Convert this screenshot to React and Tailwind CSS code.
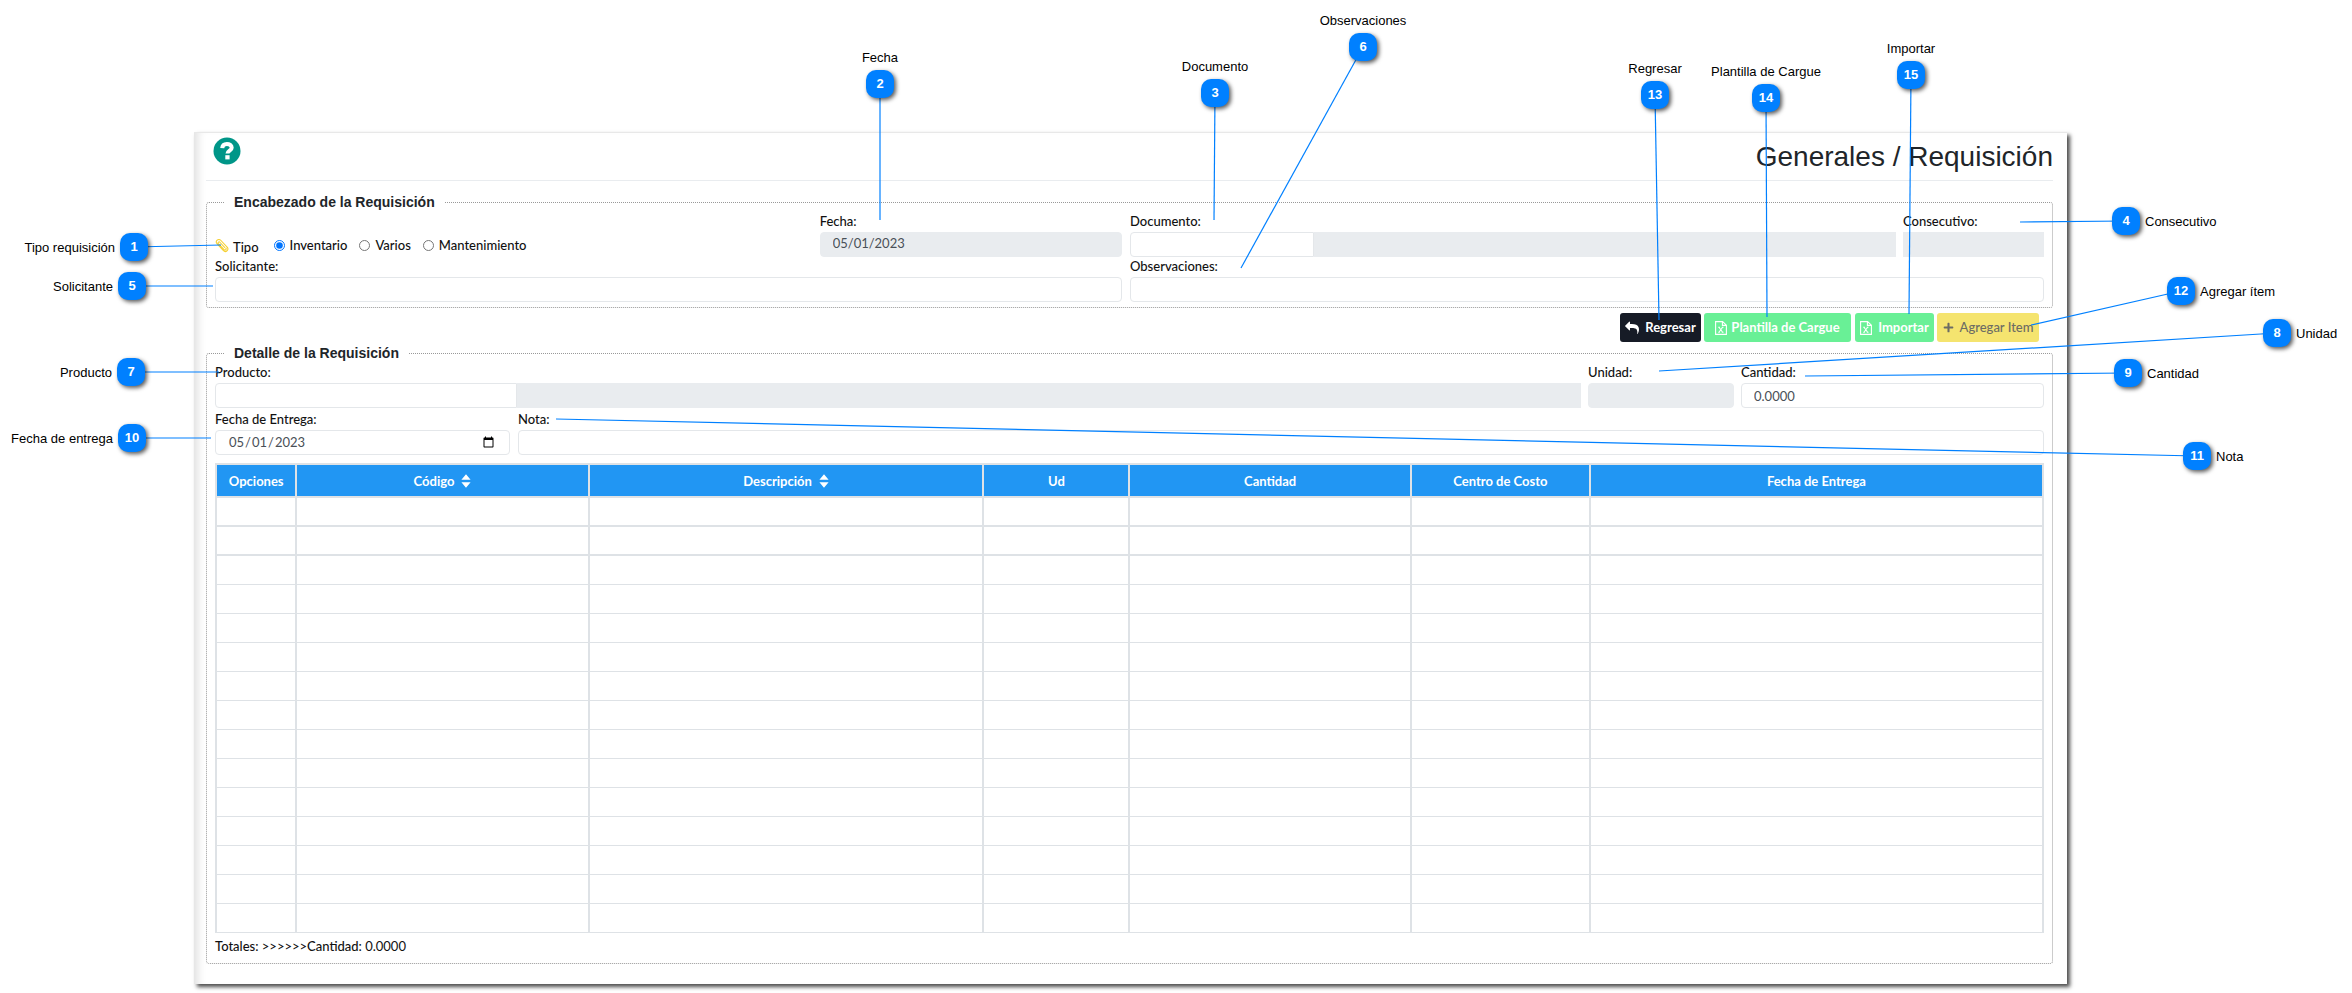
import { FaPlus } from 'react-icons/fa';

const L = "font-['Lato',sans-serif]";
const A = "font-['Liberation_Sans',Arial,sans-serif]";

const callouts = [
  { n: 1, x: 120, y: 233, label: 'Tipo requisición', side: 'left', to: [221, 245] },
  { n: 2, x: 866, y: 70, label: 'Fecha', side: 'top', to: [880, 220] },
  { n: 3, x: 1201, y: 79, label: 'Documento', side: 'top', to: [1214, 220] },
  { n: 4, x: 2112, y: 207, label: 'Consecutivo', side: 'right', to: [2020, 222] },
  { n: 5, x: 118, y: 272, label: 'Solicitante', side: 'left', to: [213, 286] },
  { n: 6, x: 1349, y: 33, label: 'Observaciones', side: 'top', to: [1241, 268] },
  { n: 7, x: 117, y: 358, label: 'Producto', side: 'left', to: [219, 372] },
  { n: 8, x: 2263, y: 319, label: 'Unidad', side: 'right', to: [1659, 371] },
  { n: 9, x: 2114, y: 359, label: 'Cantidad', side: 'right', to: [1805, 376] },
  { n: 10, x: 118, y: 424, label: 'Fecha de entrega', side: 'left', to: [211, 438] },
  { n: 11, x: 2183, y: 442, label: 'Nota', side: 'right', to: [556, 419] },
  { n: 12, x: 2167, y: 277, label: 'Agregar ítem', side: 'right', to: [2031, 325] },
  { n: 13, x: 1641, y: 81, label: 'Regresar', side: 'top', to: [1659, 320] },
  { n: 14, x: 1752, y: 84, label: 'Plantilla de Cargue', side: 'top', to: [1767, 317] },
  { n: 15, x: 1897, y: 61, label: 'Importar', side: 'top', to: [1909, 314] },
];

const sideClass = {
  left: 'right-full mr-[5px] top-[5px]',
  right: 'left-full ml-[5px] top-[5px]',
  top: 'bottom-full mb-[2px] left-1/2 -translate-x-1/2',
};

function Callouts() {
  return (
    <div className={`pointer-events-none absolute inset-0 ${A}`}>
      <svg className="absolute inset-0 size-full" aria-hidden="true">
        {callouts.map((c) => (
          <line key={c.n} x1={c.x + 14} y1={c.y + 14} x2={c.to[0]} y2={c.to[1]} stroke="#0080ff" strokeWidth="1.2" />
        ))}
      </svg>
      {callouts.map((c) => (
        <div
          key={c.n}
          className="absolute flex size-7 items-center justify-center rounded-[10px] bg-[#0080ff] text-[13px] font-bold text-white shadow-[2px_2px_4px_rgba(0,0,0,0.65)]"
          style={{ left: c.x, top: c.y }}
        >
          {c.n}
          <span className={`absolute text-[13px] leading-5 font-normal whitespace-nowrap text-black ${sideClass[c.side]}`}>
            {c.label}
          </span>
        </div>
      ))}
    </div>
  );
}

const base = 'block h-[25px] min-w-0 border px-3 text-[13px] text-[#495057]';
const box = `${base} w-full rounded-[4px] border-[#e4e7ea] bg-white`;
const boxLeft = `${base} rounded-l-[4px] border-[#e4e7ea] bg-white`;
const grey = `${base} w-full rounded-[4px] border-[#e9ecef] bg-[#e9ecef] pb-[3px]`;
const greySquare = `${base} w-full border-[#e9ecef] bg-[#e9ecef]`;

function Field({ id, label, className = '', children }) {
  return (
    <div className={`min-w-0 ${className}`}>
      <label htmlFor={id} className="block h-5 text-[13px] leading-[19px] font-medium text-[#111]">
        {label}
      </label>
      {children}
    </div>
  );
}

function Legend({ children }) {
  return <legend className={`ml-[10px] px-[9px] text-[14px] leading-5 font-bold text-[#212529] ${A}`}>{children}</legend>;
}

function Reply() {
  return (
    <svg viewBox="0 0 1792 1792" className="size-[14px]" fill="currentColor" aria-hidden="true">
      <path d="M1792 1120q0 166-127 451-3 7-10.500 24t-13.500 30-13 22q-12 17-28 17-15 0-23.500-10t-8.500-25q0-9 2.500-26.500t2.500-23.500q5-68 5-123 0-101-17.500-181t-48.500-138.500-80-101-105.500-69.500-133-42.500-154-21.500-175.500-6h-224v256q0 26-19 45t-45 19-45-19l-512-512q-19-19-19-45t19-45l512-512q19-19 45-19t45 19 19 45v256h224q713 0 875 403 53 134 53 333z" />
    </svg>
  );
}

function FileExcel() {
  return (
    <svg viewBox="0 0 12 14" className="h-[14px] w-3" fill="none" stroke="currentColor" strokeWidth="1.100" aria-hidden="true">
      <path d="M.6.600h7l3.800 3.600v9.200H.6zM7.400.8v3.600h3.800M4 6.200l3.600 5M7.600 6.200l-3.600 5M3.200 6.200h1.700M6.800 6.200h1.700M3.200 11.200h1.700M6.800 11.200h1.700" />
    </svg>
  );
}

function Clip() {
  return (
    <svg viewBox="0 0 24 24" className="h-[15px] w-[14px]" fill="none" stroke="#f5cf2e" strokeWidth="1.800" strokeLinecap="round" aria-hidden="true">
      <path d="M4 9.500 14.500 20.800a4.300 4.300 0 0 0 6.300-5.900L9.800 3a4.300 4.300 0 0 0-6.300 5.900M16.500 15.200 8.300 6.400M8.300 6.400c-1.700-1.600-4 .7-2.500 2.400l9.800 10.400c2 1.700 4.600-.8 3-2.800" />
    </svg>
  );
}

function Sort() {
  return (
    <svg viewBox="0 0 10 16" className="h-4 w-[10px]" fill="currentColor" aria-hidden="true">
      <path d="M5 1.300 9.600 6.800H.4zM5 14.700.4 9.200h9.200z" />
    </svg>
  );
}

const columns = [
  { t: 'Opciones', w: 'w-[4.4%]' },
  { t: 'Código', w: 'w-[16%]', sort: true },
  { t: 'Descripción', w: 'w-[21.6%]', sort: true },
  { t: 'Ud', w: 'w-[8%]' },
  { t: 'Cantidad', w: 'w-[15.4%]' },
  { t: 'Centro de Costo', w: 'w-[9.8%]' },
  { t: 'Fecha de Entrega', w: 'w-[24.8%]' },
];

const rows = Array.from({ length: 15 }, (_, i) => i);

const btn = 'flex h-[29px] items-center justify-center rounded-[3px] text-[13px] whitespace-nowrap';

export default function App() {
  return (
    <div className={`relative min-h-screen bg-white pt-[132px] pr-[285px] pb-2 pl-[194px] ${L}`}>
      <main className="border-t border-[#e8e8e8] bg-white pr-[14px] pb-5 pl-3 shadow-[3px_3px_4px_rgba(0,0,0,0.7),inset_10px_0_8px_-6px_rgba(0,0,0,0.12)]">
        <header className="flex h-12 items-start justify-between border-b border-[#e9ecef] pt-1 pl-[7px]">
          <button type="button" aria-label="Ayuda">
            <svg viewBox="0 0 28 28" className="size-7" aria-hidden="true">
              <circle cx="14" cy="14" r="13.500" fill="#009688" />
              <path d="M9.200 11.200c.2-2.700 2-4.200 4.700-4.200 2.600 0 4.800 1.300 4.800 3.700 0 2.900-4.200 3-4.200 5.900" fill="none" stroke="#fff" strokeWidth="4" />
              <path d="M12.300 18.200h4.300v4.200h-4.300z" fill="#fff" />
            </svg>
          </button>
          <h1 className={`pt-0.5 text-[28px] leading-9 text-[#212529] ${A}`}>Generales / Requisición</h1>
        </header>

        <fieldset className="mt-[11px] rounded-[3px] border border-dotted border-[#999] px-2 pb-[5px]">
          <Legend>Encabezado de la Requisición</Legend>
          <div className="grid grid-cols-[907fr_914fr] gap-x-2">
            <div className="flex">
              <div className="flex flex-1 items-end text-[13px] leading-5 font-medium text-[#111]" role="radiogroup" aria-label="Tipo">
                <div className="flex items-center">
                  <Clip />
                  <span className="mr-[15px] ml-1 pt-1">Tipo</span>
                  <div className="flex gap-3">
                    {['Inventario', 'Varios', 'Mantenimiento'].map((t, i) => (
                      <label key={t} className="flex items-center gap-[5px]">
                        <input type="radio" name="tipo" defaultChecked={i === 0} className="size-[11px]" />
                        {t}
                      </label>
                    ))}
                  </div>
                </div>
              </div>
              <Field id="fecha" label="Fecha:" className="w-1/3">
                <input id="fecha" readOnly defaultValue="05/01/2023" className={grey} />
              </Field>
            </div>
            <div className="flex">
              <Field id="doc" label="Documento:" className="flex-1">
                <div className="flex">
                  <input id="doc" className={`${boxLeft} w-[184px] shrink-0`} />
                  <input aria-label="Nombre del documento" readOnly className={greySquare} />
                </div>
              </Field>
              <Field id="cons" label="Consecutivo:" className="ml-[7px] w-[141px]">
                <input id="cons" readOnly className={greySquare} />
              </Field>
            </div>
            <Field id="sol" label="Solicitante:">
              <input id="sol" className={box} />
            </Field>
            <Field id="obs" label="Observaciones:">
              <input id="obs" className={box} />
            </Field>
          </div>
        </fieldset>

        <div className="mt-[5px] flex justify-end gap-[3px] pr-[14px]">
          <button type="button" className={`${btn} w-[81px] gap-1.5 bg-[#161b26] font-bold text-white`}>
            <Reply /> Regresar
          </button>
          <button type="button" className={`${btn} w-[147px] gap-1 bg-[#69f096] font-bold text-white`}>
            <FileExcel /> Plantilla de Cargue
          </button>
          <button type="button" className={`${btn} ml-px w-[79px] gap-1.5 bg-[#69f096] font-bold text-white`}>
            <FileExcel /> Importar
          </button>
          <button type="button" className={`${btn} w-[102px] gap-1.5 bg-[#f5e46f] font-medium text-[#6c6c64]`}>
            <FaPlus className="size-[11px]" /> Agregar Item
          </button>
        </div>

        <fieldset className="mt-px rounded-[3px] border border-dotted border-[#999] px-2 pb-[7px]">
          <Legend>Detalle de la Requisición</Legend>
          <div className="flex">
            <Field id="prod" label="Producto:" className="flex-1">
              <div className="flex">
                <input id="prod" className={`${boxLeft} w-[302px] shrink-0`} />
                <input aria-label="Nombre del producto" readOnly className={greySquare} />
              </div>
            </Field>
            <Field id="uni" label="Unidad:" className="ml-[7px] w-[146px]">
              <input id="uni" readOnly className={grey} />
            </Field>
            <Field id="cant" label="Cantidad:" className="ml-[7px] w-[303px]">
              <input id="cant" defaultValue="0.0000" className={box} />
            </Field>
          </div>
          <div className="mt-[2px] flex gap-2">
            <Field id="entrega" label="Fecha de Entrega:" className="w-[295px]">
              <input id="entrega" type="date" defaultValue="2023-05-01" className={box} />
            </Field>
            <Field id="nota" label="Nota:" className="flex-1">
              <input id="nota" className={box} />
            </Field>
          </div>
          <table className="mt-2 w-full table-fixed border-collapse">
            <thead>
              <tr className="h-[33px] bg-[#2196f3] text-[13px] leading-5 font-bold text-white">
                {columns.map((c) => (
                  <th key={c.t} className={`border-2 border-[#dee2e6] ${c.w}`}>
                    <span className="flex items-center justify-center gap-[7px]">
                      {c.t}
                      {c.sort && <Sort />}
                    </span>
                  </th>
                ))}
              </tr>
            </thead>
            <tbody>
              {rows.map((r) => (
                <tr key={r} className="h-[29px]">
                  {columns.map((c) => (
                    <td key={c.t} className={`border-x-2 border-[#dee2e6] ${r < 2 ? 'border-b-2' : 'border-b'}`} />
                  ))}
                </tr>
              ))}
            </tbody>
          </table>
          <p className="mt-[3px] text-[13px] leading-5 font-medium text-[#111]">
            Totales: &gt;&gt;&gt;&gt;&gt;&gt;Cantidad: <span className="font-normal">0.0000</span>
          </p>
        </fieldset>
      </main>
      <Callouts />
    </div>
  );
}
